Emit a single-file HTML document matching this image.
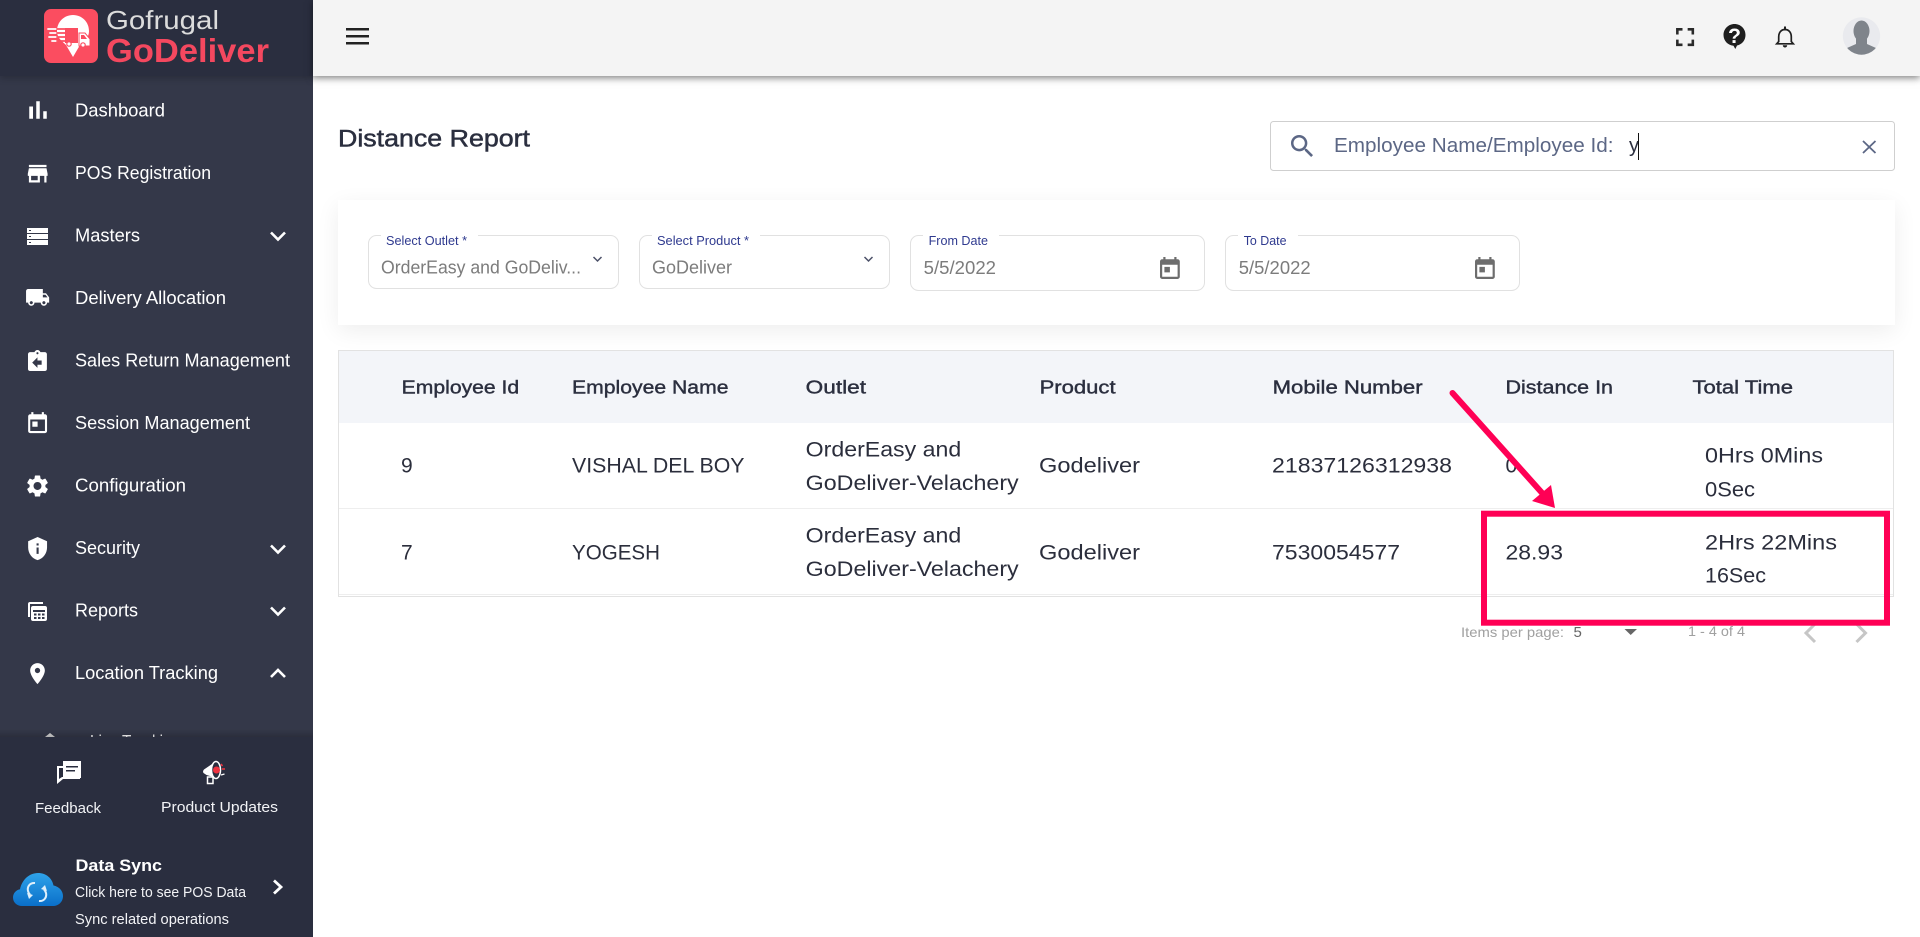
<!DOCTYPE html>
<html lang="en">
<head>
<meta charset="utf-8">
<title>Distance Report</title>
<style>
html,body{margin:0;padding:0;width:1920px;height:937px;overflow:hidden;background:#fff;font-family:"Liberation Sans",sans-serif}
.side{position:absolute;left:0;top:0;width:313px;height:937px;background:#343849}
.sidehead{position:absolute;left:0;top:0;width:313px;height:76px;background:#2a2e3f;box-shadow:0 2px 7px rgba(0,0,0,.22)}
.top{position:absolute;left:313px;top:0;width:1607px;height:76px;background:#f4f4f4;box-shadow:0 2px 7px rgba(0,0,0,.5)}
.card{position:absolute;left:338px;top:200px;width:1557px;height:125px;background:#fff;box-shadow:0 6px 22px rgba(0,0,0,.07)}
svg.main{position:absolute;left:0;top:0}
text{font-family:"Liberation Sans",sans-serif}
.m{font-size:18px;fill:#fff}
.th{font-size:18.5px;fill:#2b2f3f;stroke:#2b2f3f;stroke-width:.4px}
.td{font-size:21px;fill:#2b2e3c}
.lb{font-size:12.5px;fill:#2f3a8f}
.val{font-size:18.5px;fill:#7c7c7c}
.s{font-size:15px;fill:#f2f3f6}
</style>
</head>
<body>
<div class="side"></div>
<div class="sidehead"></div>
<div class="top"></div>
<div class="card"></div>
<svg class="main" width="1920" height="937" viewBox="0 0 1920 937" xmlns="http://www.w3.org/2000/svg">
<defs>
<linearGradient id="cl" x1="0" y1="0" x2="0" y2="1"><stop offset="0" stop-color="#2fa3ea"/><stop offset="1" stop-color="#0a6fc9"/></linearGradient>
<linearGradient id="sh" x1="0" y1="0" x2="0" y2="1"><stop offset="0" stop-color="#000" stop-opacity="0"/><stop offset="1" stop-color="#000" stop-opacity=".18"/></linearGradient>
<clipPath id="av"><circle cx="1861.5" cy="36" r="18.7"/></clipPath>
</defs>

<!-- Logo -->
<rect x="44" y="9" width="54" height="54" rx="7" fill="#fb4d60"/>
<path d="M73 15c-9 0-16 7-16 16 0 7 5 10 9 14l7 12 7-12c4-4 9-7 9-14 0-9-7-16-16-16z" fill="#fff"/>
<path d="M65 28h13v15H65z" fill="#fb4d60"/>
<path d="M79 33h6l5 6v7H79z" fill="#fff" stroke="#fb4d60" stroke-width="1"/>
<path d="M81 35h3l3 4h-6z" fill="#fb4d60"/>
<circle cx="69" cy="44" r="2.200" fill="#fff" stroke="#fb4d60" stroke-width="1.200"/><circle cx="83" cy="45" r="2.200" fill="#fff" stroke="#fb4d60" stroke-width="1.200"/>
<g stroke-width="1.800" stroke-linecap="round"><path d="M48 29h9M50 33h7M49 37h8M52 41h5" stroke="#fff"/><path d="M57 29h8M57 33h8M57 37h8M57 41h8" stroke="#fb4d60"/></g>
<text x="106" y="29" font-size="26" fill="#dcdcdc" textLength="113" lengthAdjust="spacingAndGlyphs">Gofrugal</text>
<text x="106" y="62" font-size="33" font-weight="700" fill="#f4485f" textLength="163" lengthAdjust="spacingAndGlyphs">GoDeliver</text>

<!-- Menu -->
<g fill="#fff">
<path transform="translate(23,95) scale(1.25)" d="M5 9.200h3V19H5zM10.600 5h2.800v14h-2.800zm5.600 8H19v6h-2.800z"/>
<path transform="translate(24.500,160.500) scale(1.1)" d="M20 4H4v2h16V4zm1 10v-2l-1-5H4l-1 5v2h1v6h10v-6h4v6h2v-6h1zm-9 4H6v-4h6v4z"/>
<path fill-rule="evenodd" d="M27 228h21v5H27zM27 234h21v5H27zM27 240h21v5H27zM29 230v1h2v-1zM29 236v1h2v-1zM29 242v1h2v-1z"/>
<path transform="translate(25,284.800) scale(1.05)" d="M20 8h-3V4H3c-1.100 0-2 .9-2 2v11h2c0 1.660 1.340 3 3 3s3-1.340 3-3h6c0 1.660 1.340 3 3 3s3-1.340 3-3h2v-5l-3-4zM6 18.500c-.83 0-1.500-.67-1.500-1.500s.67-1.500 1.500-1.500 1.500.67 1.500 1.500-.67 1.500-1.500 1.500zm13.500-9l1.960 2.500H17V9.500h2.500zm-1.500 9c-.83 0-1.500-.67-1.500-1.500s.67-1.500 1.500-1.500 1.500.67 1.500 1.500-.67 1.500-1.500 1.500z"/>
<path transform="translate(24.850,349) scale(1.05)" d="M19 3h-4.180C14.400 1.840 13.300 1 12 1c-1.300 0-2.400.84-2.820 2H5c-1.100 0-2 .9-2 2v14c0 1.100.9 2 2 2h14c1.100 0 2-.9 2-2V5c0-1.100-.9-2-2-2zm-7 0c.55 0 1 .45 1 1s-.45 1-1 1-1-.45-1-1 .45-1 1-1zm4 12h-4v3l-5-5 5-5v3h4v4z"/>
<path transform="translate(25,410) scale(1.05)" d="M19 4h-1V2h-2v2H8V2H6v2H5c-1.110 0-1.990.9-1.990 2L3 20c0 1.100.89 2 2 2h14c1.100 0 2-.9 2-2V6c0-1.100-.9-2-2-2zm0 16H5V9h14v11zM7 11h5v5H7z"/>
<path transform="translate(24.300,472.800) scale(1.1)" d="M19.140 12.940c.04-.3.06-.61.06-.94 0-.32-.02-.64-.07-.94l2.030-1.580c.18-.14.23-.41.12-.61l-1.920-3.320c-.12-.22-.37-.29-.59-.22l-2.390.96c-.5-.38-1.030-.7-1.620-.94l-.36-2.540c-.04-.24-.24-.41-.48-.41h-3.840c-.24 0-.43.17-.47.41l-.36 2.540c-.59.24-1.130.57-1.620.94l-2.390-.96c-.22-.08-.47 0-.59.22L2.740 8.870c-.12.21-.08.47.12.61l2.030 1.580c-.05.3-.09.63-.09.94s.02.64.07.94l-2.030 1.580c-.18.14-.23.41-.12.61l1.920 3.320c.12.22.37.29.59.22l2.390-.96c.5.38 1.030.7 1.620.94l.36 2.540c.05.24.24.41.48.41h3.840c.24 0 .44-.17.47-.41l.36-2.540c.59-.24 1.130-.56 1.620-.94l2.390.96c.22.08.47 0 .59-.22l1.920-3.320c.12-.22.07-.47-.12-.61l-2.010-1.580zM12 15.600c-1.980 0-3.600-1.620-3.600-3.600s1.620-3.600 3.600-3.600 3.600 1.620 3.600 3.600-1.620 3.600-3.600 3.600z"/>
<path transform="translate(25,536) scale(1.05)" d="M12 1L3 5v6c0 5.550 3.840 10.740 9 12 5.160-1.260 9-6.450 9-12V5l-9-4zm-1 6h2v2h-2V7zm0 4h2v6h-2v-6z"/>
<path d="M28 604c0-1.200.8-2 2-2h13v2H30v13h-2z"/>
<path fill-rule="evenodd" d="M33 606h12c1.200 0 2 .8 2 2v11c0 1.200-.8 2-2 2H33c-1.200 0-2-.8-2-2v-11c0-1.200.8-2 2-2zM33 610v2h12v-2zM34 613.500v2h2.500v-2zM38 613.500v2h2.500v-2zM42 613.500v2h2.500v-2zM34 617v2h2.500v-2zM38 617v2h2.500v-2zM42 617v2h2.500v-2z"/>
<path transform="translate(24.900,661) scale(1.05)" d="M12 2C8.130 2 5 5.130 5 9c0 5.250 7 13 7 13s7-7.750 7-13c0-3.870-3.130-7-7-7zm0 9.500c-1.380 0-2.500-1.120-2.500-2.500s1.120-2.500 2.500-2.500 2.500 1.120 2.500 2.500-1.120 2.500-2.500 2.500z"/>
</g>
<text class="m" x="75" y="116.500" textLength="90" lengthAdjust="spacingAndGlyphs">Dashboard</text>
<text class="m" x="75" y="179" textLength="136" lengthAdjust="spacingAndGlyphs">POS Registration</text>
<text class="m" x="75" y="241.500" textLength="65" lengthAdjust="spacingAndGlyphs">Masters</text>
<text class="m" x="75" y="304" textLength="151" lengthAdjust="spacingAndGlyphs">Delivery Allocation</text>
<text class="m" x="75" y="366.500" textLength="215" lengthAdjust="spacingAndGlyphs">Sales Return Management</text>
<text class="m" x="75" y="429" textLength="175" lengthAdjust="spacingAndGlyphs">Session Management</text>
<text class="m" x="75" y="491.500" textLength="111" lengthAdjust="spacingAndGlyphs">Configuration</text>
<text class="m" x="75" y="554" textLength="65" lengthAdjust="spacingAndGlyphs">Security</text>
<text class="m" x="75" y="616.500" textLength="63" lengthAdjust="spacingAndGlyphs">Reports</text>
<text class="m" x="75" y="679" textLength="143" lengthAdjust="spacingAndGlyphs">Location Tracking</text>
<g fill="none" stroke="#fff" stroke-width="2.600">
<path d="M271 232.500l7 7 7-7"/><path d="M271 545.500l7 7 7-7"/><path d="M271 607.500l7 7 7-7"/><path d="M271 677l7-7 7 7"/>
</g>
<polygon points="45,737 50,733 55,737" fill="#d8d8d8"/>
<text class="m" x="90" y="748" textLength="90" lengthAdjust="spacingAndGlyphs">Live Tracking</text>

<!-- Bottom panel -->
<rect x="0" y="729" width="313" height="8" fill="url(#sh)"/>
<rect x="0" y="737" width="313" height="200" fill="#2a2e3f"/>
<path fill="#fff" d="M57 766h6v2h-4v11l3-2h18v2H63l-6 5z"/>
<path fill="#fff" fill-rule="evenodd" d="M63 761h18v17H63zM66 766v1.500h12V766zM66 770v1.500h9V770z"/>
<path fill="#fff" d="M203.500 773c-.8-1-.5-2.500.5-3.500l11-7.500 2 16-10.500-3z"/>
<ellipse cx="216" cy="770" rx="4.500" ry="8.500" fill="#2a2e3f" stroke="#fff" stroke-width="1.500"/>
<rect x="207.500" y="777" width="5.500" height="6.500" fill="none" stroke="#fff" stroke-width="1.500"/>
<circle cx="216.500" cy="770" r="3.500" fill="#ef3340"/>
<path d="M221 764l1.500 2M222 769h3" stroke="#ef3340" stroke-width="1.500"/>
<path d="M221 775l3.500-1" stroke="#fff" stroke-width="1.200"/>
<text class="s" x="35" y="813" textLength="66" lengthAdjust="spacingAndGlyphs">Feedback</text>
<text class="s" x="161" y="812" textLength="117" lengthAdjust="spacingAndGlyphs">Product Updates</text>
<text x="75.500" y="871" font-size="17" font-weight="700" fill="#fff" textLength="86.500" lengthAdjust="spacingAndGlyphs">Data Sync</text>
<text x="75" y="897" font-size="14.500" fill="#f2f3f6" textLength="171" lengthAdjust="spacingAndGlyphs">Click here to see POS Data</text>
<text x="75" y="924" font-size="14.500" fill="#f2f3f6" textLength="154" lengthAdjust="spacingAndGlyphs">Sync related operations</text>
<path d="M22 906c-5 0-9-3.500-9-8.500 0-4.200 3-7.500 7-8.300C22 880 29 873 38 873c8 0 14 5 15.500 12.500C59 886.500 63 891 63 896c0 6-4.500 10-10 10z" fill="url(#cl)"/>
<g transform="translate(0,3)">
<g fill="none" stroke="#dff0fb" stroke-width="2"><path d="M35 880c-5-.5-8 3.500-7 8 .3 1.500 1 2.500 2 3.500"/><path d="M39 898c5 .5 8-3.500 7-8-.3-1.500-1-2.500-2-3.500"/></g>
<path d="M27 890l6 2-4 4zM47 888l-6-2 4-4z" fill="#dff0fb"/>
</g>
<path d="M274 880.500l7 6.500-7 6.500" fill="none" stroke="#fff" stroke-width="2.800"/>

<!-- Top bar icons -->
<g fill="#222"><rect x="346" y="28" width="23" height="2.500"/><rect x="346" y="35" width="23" height="2.500"/><rect x="346" y="42" width="23" height="2.500"/></g>
<path transform="translate(1669.600,21.600) scale(1.29)" fill="#2a2a2a" d="M7 14H5v5h5v-2H7v-3zm-2-4h2V7h3V5H5v5zm12 7h-3v2h5v-5h-2v3zM14 5v2h3v3h2V5h-5z"/>
<path d="M1734.500 24c-6 0-11 4.800-11 11 0 5.800 4.300 10.200 10 10.800l1.800 3.200 1.700-3.500c5-1 8.500-5.300 8.500-10.500 0-6.200-4.800-11-11-11z" fill="#1f1f1f"/>
<text x="1728" y="43" font-size="21" font-weight="700" fill="#fff" textLength="13" lengthAdjust="spacingAndGlyphs">?</text>
<g fill="none" stroke="#1f1f1f" stroke-width="1.700">
<path d="M1785 29.500c-4.300 0-6.300 3.500-6.300 7.500v4.500l-2 2.300h16.600l-2-2.300V37c0-4-2-7.500-6.300-7.500z"/>
</g>
<rect x="1784" y="26.500" width="2" height="3" fill="#1f1f1f"/>
<path d="M1782.800 45.300h4.400c0 1.500-1 2.200-2.200 2.200s-2.200-.7-2.200-2.200z" fill="#1f1f1f"/>
<circle cx="1861.500" cy="36" r="18.700" fill="#e9eaee"/>
<g clip-path="url(#av)" fill="#7f848b">
<ellipse cx="1861.500" cy="31" rx="8" ry="10.500"/>
<path d="M1856 38h11v6l9 4c2 1 3 4 4 8h-37c1-4 2-7 4-8l9-4z"/>
</g>

<!-- Title + search -->
<text x="338" y="146.500" font-size="24" fill="#2b2f3f" stroke="#2b2f3f" stroke-width=".5" textLength="192" lengthAdjust="spacingAndGlyphs">Distance Report</text>
<rect x="1270.500" y="121.500" width="624" height="49" rx="3" fill="#fff" stroke="#cfcfcf"/>
<path transform="translate(1287.200,131.200) scale(1.26)" fill="#5c6785" d="M15.500 14h-.79l-.28-.27C15.410 12.590 16 11.110 16 9.500 16 5.910 13.090 3 9.500 3S3 5.910 3 9.500 5.910 16 9.500 16c1.610 0 3.090-.59 4.230-1.570l.27.28v.79l5 4.990L20.490 19l-4.990-5zm-6 0C7.010 14 5 11.990 5 9.500S7.010 5 9.500 5 14 7.010 14 9.500 11.990 14 9.500 14z"/>
<text x="1334" y="152" font-size="20" fill="#5c6785" textLength="279.500" lengthAdjust="spacingAndGlyphs">Employee Name/Employee Id:</text>
<text x="1629" y="152" font-size="20" fill="#2b2f3f">y</text>
<rect x="1638" y="133" width="1" height="27" fill="#111"/>
<path d="M1863 141l12.500 12M1875.500 141L1863 153" stroke="#5c6785" stroke-width="1.800"/>

<!-- Filter fields -->
<g fill="#fff" stroke="#e1e1e1" stroke-width="1">
<rect x="368.500" y="235.500" width="250" height="53" rx="8"/>
<rect x="639.500" y="235.500" width="250" height="53" rx="8"/>
<rect x="910.500" y="235.500" width="294" height="55" rx="8"/>
<rect x="1225.500" y="235.500" width="294" height="55" rx="8"/>
</g>
<g fill="#fff"><rect x="381" y="233" width="97" height="5"/><rect x="652" y="233" width="108" height="5"/><rect x="923" y="233" width="76" height="5"/><rect x="1238" y="233" width="60" height="5"/></g>
<text class="lb" x="386" y="245" textLength="81" lengthAdjust="spacingAndGlyphs">Select Outlet *</text>
<text class="lb" x="657" y="245" textLength="92" lengthAdjust="spacingAndGlyphs">Select Product *</text>
<text class="lb" x="928.600" y="245" textLength="59.400" lengthAdjust="spacingAndGlyphs">From Date</text>
<text class="lb" x="1243.700" y="245" textLength="42.800" lengthAdjust="spacingAndGlyphs">To Date</text>
<text class="val" x="381" y="273.500" textLength="200" lengthAdjust="spacingAndGlyphs">OrderEasy and GoDeliv...</text>
<text class="val" x="652" y="273.500" textLength="80" lengthAdjust="spacingAndGlyphs">GoDeliver</text>
<text class="val" x="923.700" y="274" textLength="72.300" lengthAdjust="spacingAndGlyphs">5/5/2022</text>
<text class="val" x="1238.800" y="274" textLength="71.800" lengthAdjust="spacingAndGlyphs">5/5/2022</text>
<g fill="none" stroke="#4b5068" stroke-width="1.500"><path d="M593.500 257l4 4 4-4"/><path d="M864.500 257l4 4 4-4"/></g>
<g fill="#6d6d6d">
<path transform="translate(1156.700,255.900) scale(1.1)" d="M19 3h-1V1h-2v2H8V1H6v2H5c-1.110 0-1.990.9-1.990 2L3 19c0 1.100.89 2 2 2h14c1.100 0 2-.9 2-2V5c0-1.100-.9-2-2-2zm0 16H5V8h14v11zM7 10h5v5H7z"/>
<path transform="translate(1471.700,255.900) scale(1.1)" d="M19 3h-1V1h-2v2H8V1H6v2H5c-1.110 0-1.990.9-1.990 2L3 19c0 1.100.89 2 2 2h14c1.100 0 2-.9 2-2V5c0-1.100-.9-2-2-2zm0 16H5V8h14v11zM7 10h5v5H7z"/>
</g>

<!-- Table -->
<rect x="338.500" y="350.500" width="1555" height="246" fill="#fff" stroke="#e2e2e2"/>
<rect x="339" y="351" width="1554" height="72" fill="#f3f5f9"/>
<path d="M339 508.500h1554M339 594.500h1554" stroke="#eeeeee"/>
<text class="th" x="401.700" y="393.500" textLength="117.500" lengthAdjust="spacingAndGlyphs">Employee Id</text>
<text class="th" x="572" y="393.500" textLength="156.500" lengthAdjust="spacingAndGlyphs">Employee Name</text>
<text class="th" x="805.700" y="393.500" textLength="60.300" lengthAdjust="spacingAndGlyphs">Outlet</text>
<text class="th" x="1039.600" y="393.500" textLength="76" lengthAdjust="spacingAndGlyphs">Product</text>
<text class="th" x="1272.600" y="393.500" textLength="150" lengthAdjust="spacingAndGlyphs">Mobile Number</text>
<text class="th" x="1505.500" y="393.500" textLength="107.500" lengthAdjust="spacingAndGlyphs">Distance In</text>
<text class="th" x="1692.500" y="393.500" textLength="100.500" lengthAdjust="spacingAndGlyphs">Total Time</text>

<text class="td" x="401" y="472.500">9</text>
<text class="td" x="572" y="472.500" textLength="172.500" lengthAdjust="spacingAndGlyphs">VISHAL DEL BOY</text>
<text class="td" x="805.700" y="456.500" textLength="155.500" lengthAdjust="spacingAndGlyphs">OrderEasy and</text>
<text class="td" x="805.700" y="490" textLength="213" lengthAdjust="spacingAndGlyphs">GoDeliver-Velachery</text>
<text class="td" x="1039" y="472.500" textLength="101" lengthAdjust="spacingAndGlyphs">Godeliver</text>
<text class="td" x="1272" y="472.500" textLength="180" lengthAdjust="spacingAndGlyphs">21837126312938</text>
<text class="td" x="1505.500" y="472.500">0</text>
<text class="td" x="1705" y="462.700" textLength="118" lengthAdjust="spacingAndGlyphs">0Hrs 0Mins</text>
<text class="td" x="1705" y="496.700" textLength="50" lengthAdjust="spacingAndGlyphs">0Sec</text>

<text class="td" x="401" y="559.500">7</text>
<text class="td" x="572" y="559.500" textLength="88" lengthAdjust="spacingAndGlyphs">YOGESH</text>
<text class="td" x="805.700" y="542.700" textLength="155.500" lengthAdjust="spacingAndGlyphs">OrderEasy and</text>
<text class="td" x="805.700" y="576" textLength="213" lengthAdjust="spacingAndGlyphs">GoDeliver-Velachery</text>
<text class="td" x="1039" y="559.500" textLength="101" lengthAdjust="spacingAndGlyphs">Godeliver</text>
<text class="td" x="1272" y="559.500" textLength="128" lengthAdjust="spacingAndGlyphs">7530054577</text>
<text class="td" x="1505.500" y="559.500" textLength="57.500" lengthAdjust="spacingAndGlyphs">28.93</text>
<text class="td" x="1705" y="549.300" textLength="132" lengthAdjust="spacingAndGlyphs">2Hrs 22Mins</text>
<text class="td" x="1705" y="582.700" textLength="61" lengthAdjust="spacingAndGlyphs">16Sec</text>

<!-- Paginator -->
<text x="1461" y="637" font-size="14" fill="#a0a0a0" textLength="103" lengthAdjust="spacingAndGlyphs">Items per page:</text>
<text x="1573.500" y="637" font-size="15" fill="#666">5</text>
<polygon points="1624.500,629 1637,629 1630.700,635" fill="#666"/>
<text x="1688" y="636" font-size="14" fill="#a0a0a0" textLength="57" lengthAdjust="spacingAndGlyphs">1 - 4 of 4</text>
<g fill="none" stroke="#c6c6c6" stroke-width="3"><path d="M1815 624l-9 9 9 9"/><path d="M1856.500 624l9 9-9 9"/></g>

<!-- Annotation -->
<rect x="1484" y="513.700" width="403" height="109" fill="none" stroke="#ff0055" stroke-width="6"/>
<line x1="1452.500" y1="393" x2="1543" y2="494" stroke="#ff0055" stroke-width="6" stroke-linecap="round"/>
<polygon points="1555,508 1532,501 1551,485" fill="#ff0055"/>
</svg>
</body>
</html>
